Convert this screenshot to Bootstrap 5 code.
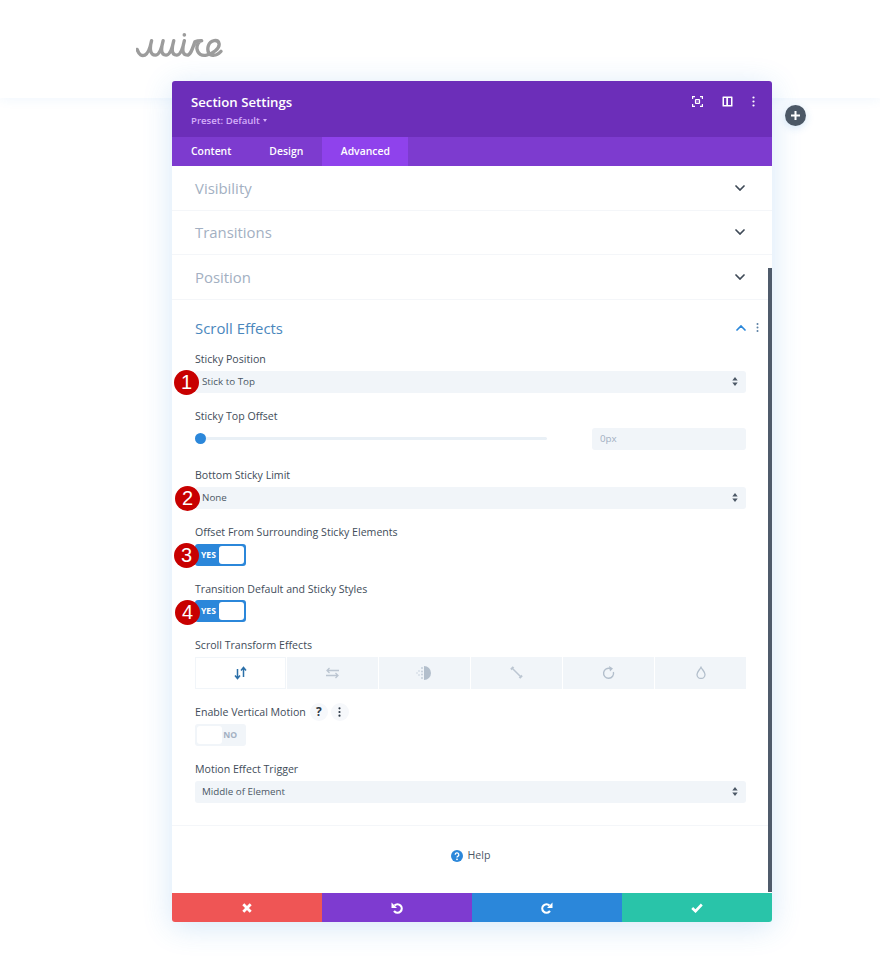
<!doctype html>
<html lang="en"><head><meta charset="utf-8"><title>Section Settings</title>
<link href="https://cdn.jsdelivr.net/npm/bootstrap@5.3.0/dist/css/bootstrap.min.css" rel="stylesheet">
<style>
html,body{height:965px;overflow:hidden;background:#fff;font-family:"Open Sans",sans-serif;color:#4c5866}
.site-top{height:98px;padding:33px 0 0 136px;background:#fff;box-shadow:0 0 12px rgba(43,135,218,.09)}
.builder-win{position:absolute;left:172px;top:81px;width:600px;height:841px;background:#fff;border-radius:3px;box-shadow:0 5px 30px rgba(43,135,218,.2);display:flex;flex-direction:column;overflow:hidden}
.win-head{height:56px;background:#6c2eb9;color:#fff;padding:12px 17.5px 0 19px;flex:none}
.win-title{font-size:13.2px;font-weight:600;line-height:18px}
.win-preset{font-size:9.6px;font-weight:600;line-height:16px;color:#d5aefa;margin-top:2px}
.caret-mini{display:inline-block;border:2.5px solid transparent;border-top:3px solid #d5aefa;border-bottom:0;margin-left:3px;vertical-align:2px}
.win-tabs{height:29px;background:#7d3bcf;flex:none}
.win-tabs .nav-link{color:#fff;font-size:10.4px;font-weight:600;line-height:29px;padding:0 19px;height:29px;border-radius:0}
.win-tabs .nav-link.active{background:#8f42ec;color:#fff;padding:0 18.5px}
.win-body{flex:1;min-height:0;position:relative}
.fold-row{height:44.5px;padding:0 27px 0 23px;border-bottom:1px solid #f4f6f9;font-size:14.9px;color:#a3b0c2;font-weight:400}
.fold-open{padding:18px 26px 0 23px;border-bottom:1px solid #f4f6f9;height:526.5px}
.fold-head{height:20px;line-height:20px;font-size:14.9px;color:#4a87bd;margin-bottom:13px;margin-right:-12.5px}
.fld{margin-bottom:15px;position:relative}
.fld-lab{font-size:10.6px;font-weight:500;line-height:16px;height:16px;margin-bottom:4px;color:#414c59}
.sel-box.form-select{height:22px;min-height:22px;padding:0 20px 0 7px;border:0;border-radius:3px;background-color:#f1f5f9;font-size:9.8px;font-weight:500;color:#4c5866;line-height:22px;background-size:6px 9px;background-position:right 8px center;background-image:url("data:image/svg+xml,%3Csvg xmlns='http://www.w3.org/2000/svg' viewBox='0 0 6 10'%3E%3Cpath fill='%234c5866' d='M3 0l3 4H0zM3 10L0 6h6z'/%3E%3C/svg%3E")}
.slide-line{-webkit-appearance:none;appearance:none;width:352px;height:22px;padding:0;margin:0;background:transparent;display:block}
.slide-line::-webkit-slider-runnable-track{height:3px;background:#e9f0f6;border-radius:2px}
.slide-line::-webkit-slider-thumb{-webkit-appearance:none;appearance:none;width:11px;height:11px;margin-top:-4px;border-radius:50%;background:#2b87da}
.num-box.form-control{width:154px;height:22px;min-height:22px;padding:0 8px;border:0;border-radius:3px;background:#f1f5f9;font-size:9.8px;font-weight:500;color:#a3b0c2}
.tog{width:51px;height:22px;border-radius:3px;background:#2b87da;color:#fff;font-size:8.6px;font-weight:700;padding:2px;line-height:18px}
.tog-knob{width:25px;height:18px;background:#fff;border-radius:3px}
.tog.off{background:#f1f5f9;color:#a3b0c2}
.num-pin{position:absolute;left:-21px;width:25px;height:25px;border-radius:50%;background:#c80000;color:#fff;font:400 20px/25px "Liberation Sans",sans-serif;text-align:center}
.fx-tab{flex:1 1 0;height:32px;background:#f1f5f9;display:flex;align-items:center;justify-content:center}
.fx-tab.on{background:#fff;box-shadow:inset 0 0 0 1px #f1f5f9}
.hint-dot{width:18px;height:18px;flex:none;border-radius:50%;background:#f6f8fb;font-size:12px;font-weight:700;color:#2e3a47;line-height:18px;text-align:center}
.help-row{height:67px;padding:0 3px 7px 0;font-size:10.6px;font-weight:500;color:#4c5866}
.win-foot{height:29px;flex:none}
.win-foot .btn{border:0;border-radius:0;flex:1 1 0;padding:0;height:29px;display:flex;align-items:center;justify-content:center}
.f-red{background:#ef5555}.f-pur{background:#7e3bd0}.f-blu{background:#2b87da}.f-grn{background:#29c4a9}
.scroll-bar{position:absolute;right:0;top:102px;width:4px;height:624px;background:#4f5b6b}
.add-dot{position:absolute;left:785px;top:105px;width:21px;height:21px;border-radius:50%;background:#4c5866;box-shadow:0 2px 8px rgba(43,135,218,.2)}
</style></head>
<body>
<header class="site-top">
<svg width="88" height="27" viewBox="0 0 91 28" fill="none" stroke="#9c9c9c" stroke-width="3.500" stroke-linecap="round" stroke-linejoin="round" role="img" aria-label="Logo"><path d="M1 17C3 23 6 24 9 23C13 21 15 13 16 8C14 15 14 23 20 23C25 23 27 13 28 8C26 15 25 23 31 23C36 23 38 13 39 8C37 15 36 23 42 23C47 23 49 13 50 8C48 15 47 23 53 23C57 23 59 14 61 9C63 8 65 8 68 8C65 9 63 11 63 16C64 22 68 24 73 23C79 22 87 16 86 11C85 6 77 7 75 13C73 19 76 24 81 23C84 23 86 21 88 19"/><circle cx="50" cy="2" r="1.900" fill="#9c9c9c" stroke="none"/></svg>
</header>
<main class="builder-win">
<div class="win-head d-flex justify-content-between">
<div><div class="win-title">Section Settings</div><div class="win-preset">Preset: Default<span class="caret-mini"></span></div></div>
<div class="d-flex align-items-start" style="gap:19px;padding-top:3px">
<svg width="11" height="11" viewBox="0 0 11 11" fill="none" stroke="#fff" stroke-width="1.2"><path d="M.6 3V.6H3M8 .6h2.4V3M10.4 8v2.4H8M3 10.400H.6V8"/><rect x="3.500" y="3.500" width="4" height="4" rx=".5" fill="#fff" fill-opacity=".25"/></svg>
<svg width="11" height="11" viewBox="0 0 11 11"><path fill="#fff" fill-rule="evenodd" d="M1 .5h9a.5.5 0 0 1 .5.500v9a.500.500 0 0 1-.5.500H1a.500.500 0 0 1-.5-.500V1A.500.500 0 0 1 1 .5zM2 2v7h2.300V2zM6 2v7h3V2z"/></svg>
<svg width="3" height="11" viewBox="0 0 3 11" fill="#fff"><circle cx="1.500" cy="1.500" r="1.100"/><circle cx="1.500" cy="5.500" r="1.100"/><circle cx="1.500" cy="9.500" r="1.100"/></svg>
</div></div>
<nav class="win-tabs nav"><a class="nav-link" href="#">Content</a><a class="nav-link" href="#">Design</a><a class="nav-link active" href="#">Advanced</a></nav>
<div class="win-body">
<div class="fold-row d-flex justify-content-between align-items-center">Visibility<svg width="10" height="6" viewBox="0 0 10 6" fill="none" stroke="#3f4a57" stroke-width="1.700" stroke-linecap="round"><path d="M1 1l4 4 4-4"/></svg></div>
<div class="fold-row d-flex justify-content-between align-items-center">Transitions<svg width="10" height="6" viewBox="0 0 10 6" fill="none" stroke="#3f4a57" stroke-width="1.700" stroke-linecap="round"><path d="M1 1l4 4 4-4"/></svg></div>
<div class="fold-row d-flex justify-content-between align-items-center">Position<svg width="10" height="6" viewBox="0 0 10 6" fill="none" stroke="#3f4a57" stroke-width="1.700" stroke-linecap="round"><path d="M1 1l4 4 4-4"/></svg></div>
<section class="fold-open">
<div class="fold-head d-flex justify-content-between align-items-center"><span>Scroll Effects</span><span class="d-flex align-items-center" style="gap:10px"><svg width="10" height="6" viewBox="0 0 10 6" fill="none" stroke="#2b87da" stroke-width="1.700" stroke-linecap="round"><path d="M1 5l4-4 4 4"/></svg><svg width="3" height="9" viewBox="0 0 3 9" fill="#5a7fa3"><circle cx="1.500" cy="1" r="1"/><circle cx="1.500" cy="4.500" r="1"/><circle cx="1.500" cy="8" r="1"/></svg></span></div>
<div class="fld"><div class="fld-lab">Sticky Position</div><select class="form-select sel-box"><option>Stick to Top</option></select><span class="num-pin" style="top:19px">1</span></div>
<div class="fld" style="margin-bottom:17px"><div class="fld-lab">Sticky Top Offset</div><div class="d-flex justify-content-between"><input type="range" class="slide-line" min="0" max="100" value="0"><input class="form-control num-box" value="0px"></div></div>
<div class="fld"><div class="fld-lab">Bottom Sticky Limit</div><select class="form-select sel-box"><option>None</option></select><span class="num-pin" style="top:19px;left:-20px">2</span></div>
<div class="fld"><div class="fld-lab">Offset From Surrounding Sticky Elements</div><div class="tog d-flex justify-content-between"><span class="ps-1">YES</span><span class="tog-knob"></span></div><span class="num-pin" style="top:19px">3</span></div>
<div class="fld" style="margin-bottom:14.500px"><div class="fld-lab" style="margin-bottom:3.500px">Transition Default and Sticky Styles</div><div class="tog d-flex justify-content-between"><span class="ps-1">YES</span><span class="tog-knob"></span></div><span class="num-pin" style="top:19px;left:-20px">4</span></div>
<div class="fld"><div class="fld-lab">Scroll Transform Effects</div><div class="d-flex" style="gap:1.500px">
<div class="fx-tab on"><svg width="13" height="14" viewBox="0 0 13 14" fill="none" stroke="#2b6fa8" stroke-width="1.500"><path d="M3.500 3v9M1 9.500l2.500 3 2.500-3M9.500 11V2M7 4.500l2.500-3 2.500 3"/></svg></div>
<div class="fx-tab"><svg width="15" height="12" viewBox="0 0 15 12" fill="none" stroke="#bcc6d2" stroke-width="1.300"><path d="M14 3.500H2M4.500 1L2 3.500 4.500 6M1 8.500h12M10.500 6L13 8.500 10.500 11"/></svg></div>
<div class="fx-tab"><svg width="16" height="16" viewBox="0 0 16 16"><path fill="#b3bfcc" d="M8 1a7 7 0 0 1 0 14z"/><g fill="#c5cfda"><circle cx="6" cy="3" r="1"/><circle cx="6" cy="6.500" r="1"/><circle cx="6" cy="9.500" r="1"/><circle cx="6" cy="13" r="1"/><circle cx="3" cy="6" r=".8"/><circle cx="3" cy="10" r=".8"/><circle cx="1" cy="8" r=".7"/></g></svg></div>
<div class="fx-tab"><svg width="13" height="13" viewBox="0 0 13 13" fill="none" stroke="#bcc6d2" stroke-width="1.500"><path d="M3 3l7 7"/><path stroke-width="2.200" d="M1 3.500L3.500 1M9.500 12L12 9.500"/></svg></div>
<div class="fx-tab"><svg width="13" height="14" viewBox="0 0 13 14" fill="none" stroke="#b3bfcc" stroke-width="1.400"><path d="M8.500 2.700A5 5 0 1 0 11.400 6"/><path fill="#b3bfcc" stroke="none" d="M7 0l4 2.500L8 5.500z"/></svg></div>
<div class="fx-tab"><svg width="10" height="13" viewBox="0 0 10 13" fill="none" stroke="#b3bfcc" stroke-width="1.300"><path d="M5 1.200C3.500 4 1 6 1 8.400a4 4 0 0 0 8 0C9 6 6.500 4 5 1.200z"/></svg></div>
</div></div>
<div class="fld"><div class="d-flex align-items-center fld-lab"><span>Enable Vertical Motion</span><span class="hint-dot" style="margin-left:4px">?</span><span class="hint-dot d-flex align-items-center justify-content-center" style="margin-left:3px"><svg width="3" height="10" viewBox="0 0 3 10" fill="#2e3a47"><circle cx="1.500" cy="1.300" r="1.100"/><circle cx="1.500" cy="5" r="1.100"/><circle cx="1.500" cy="8.700" r="1.100"/></svg></span></div><div class="tog off d-flex justify-content-between"><span class="tog-knob"></span><span class="pe-1" style="margin-right:3px">NO</span></div></div>
<div class="fld mb-0"><div class="fld-lab">Motion Effect Trigger</div><select class="form-select sel-box"><option>Middle of Element</option></select></div>
</section>
<div class="help-row d-flex align-items-center justify-content-center" style="gap:5px"><svg width="12" height="12" viewBox="0 0 12 12"><circle cx="6" cy="6" r="6" fill="#2b87da"/><path d="M4.200 4.700A1.800 1.800 0 1 1 6.800 6.300C6.200 6.700 6 6.900 6 7.500" fill="none" stroke="#fff" stroke-width="1.300"/><circle cx="6" cy="9.300" r=".9" fill="#fff"/></svg><span>Help</span></div>
<div class="scroll-bar"></div>
</div>
<footer class="win-foot d-flex">
<button class="btn f-red" aria-label="Cancel"><svg width="10" height="10" viewBox="0 0 10 10" stroke="#fff" stroke-width="2.800"><path d="M1.300 1.300l7.400 7.400M8.700 1.300L1.300 8.700"/></svg></button>
<button class="btn f-pur" aria-label="Undo"><svg width="12" height="12" viewBox="0 0 12 12" fill="none" stroke="#fff" stroke-width="2.200"><circle cx="6.500" cy="6.500" r="4.200" stroke-dasharray="20 6.400" transform="rotate(-135 6.500 6.500)"/><path fill="#fff" stroke="none" d="M.5 .5V6H6z"/></svg></button>
<button class="btn f-blu" aria-label="Redo"><svg width="12" height="12" viewBox="0 0 12 12" fill="none" stroke="#fff" stroke-width="2.200"><circle cx="5.500" cy="6.500" r="4.200" stroke-dasharray="20 6.400" transform="scale(-1 1) translate(-11 0) rotate(-135 5.500 6.500)"/><path fill="#fff" stroke="none" d="M11.500 .5V6H6z"/></svg></button>
<button class="btn f-grn" aria-label="Save"><svg width="12" height="10" viewBox="0 0 12 10" fill="none" stroke="#fff" stroke-width="2.600"><path d="M1.200 5l3.300 3.200L10.800 1.500"/></svg></button>
</footer>
</main>
<div class="add-dot d-flex align-items-center justify-content-center"><svg width="9" height="9" viewBox="0 0 9 9" stroke="#fff" stroke-width="2"><path d="M4.500 0v9M0 4.500h9"/></svg></div>
<script src="https://cdn.jsdelivr.net/npm/bootstrap@5.3.0/dist/js/bootstrap.bundle.min.js"></script>
</body></html>
